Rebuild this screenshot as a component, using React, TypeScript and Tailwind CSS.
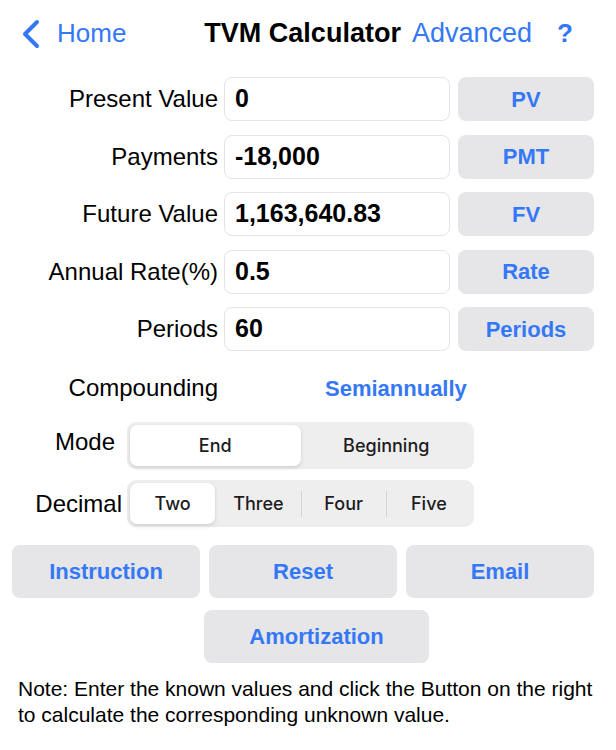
import React from "react";

const blue = "text-[#3478f6]";

function ValueRow({ label, value, action }: { label: string; value: string; action: string }) {
  return (
    <div className="flex items-center h-[44px]">
      <div className="w-[218px] text-right text-[24px] text-black">{label}</div>
      <div className="ml-[6px] w-[226px] h-[44px] rounded-[8px] border border-[#e4e4e6] bg-white flex items-center pl-[10px] text-[25px] font-bold text-black">
        {value}
      </div>
      <button className={`ml-[8px] w-[136px] h-[44px] rounded-[8px] bg-[#e6e6e8] text-[22px] font-bold ${blue}`}>
        {action}
      </button>
    </div>
  );
}

function Segmented({ items, selected }: { items: string[]; selected: number }) {
  return (
    <div className="flex w-[347px] h-[47px] rounded-[9px] bg-[#eeeeef] p-[3px]">
      {items.map((item, i) => {
        const isSel = i === selected;
        const showSep = i > 0 && i !== selected && i - 1 !== selected;
        return (
          <div key={item} className="flex-1 flex items-center">
            {i > 0 && (
              <div className={`w-px h-[26px] ${showSep ? "bg-[#d4d4d6]" : "bg-transparent"}`} />
            )}
            <div
              className={`flex-1 h-full flex items-center justify-center font-['Inter',sans-serif] text-[18px] font-medium text-[#1c1c1e] rounded-[7px] ${
                isSel ? "bg-white shadow-[0_2px_4px_rgba(0,0,0,0.12),0_0_1px_rgba(0,0,0,0.1)]" : ""
              }`}
            >
              {item}
            </div>
          </div>
        );
      })}
    </div>
  );
}

export default function App() {
  return (
    <div className="w-[616px] h-[750px] bg-white font-['Liberation_Sans',Arial,sans-serif] overflow-hidden">
      {/* nav bar */}
      <div className="flex items-center h-[66px] pt-[1px]">
        <svg className="ml-[21px]" width="20" height="30" viewBox="0 0 20 30" fill="none">
          <path d="M16 3 L4 15 L16 27" stroke="#3478f6" strokeWidth="4" strokeLinecap="round" strokeLinejoin="round" />
        </svg>
        <span className={`ml-[16px] text-[26px] ${blue}`}>Home</span>
        <span className="ml-[78px] text-[27px] font-bold text-black">TVM Calculator</span>
        <span className={`ml-[11px] text-[27px] ${blue}`}>Advanced</span>
        <span className={`ml-[25px] text-[26px] font-bold ${blue}`}>?</span>
      </div>

      {/* values */}
      <div className="mt-[11px] flex flex-col gap-[13.5px]">
        <ValueRow label="Present Value" value="0" action="PV" />
        <ValueRow label="Payments" value="-18,000" action="PMT" />
        <ValueRow label="Future Value" value="1,163,640.83" action="FV" />
        <ValueRow label="Annual Rate(%)" value="0.5" action="Rate" />
        <ValueRow label="Periods" value="60" action="Periods" />
      </div>

      {/* compounding */}
      <div className="mt-[15px] flex items-center h-[44px]">
        <div className="w-[218px] text-right text-[24px] text-black">Compounding</div>
        <span className={`ml-[107px] text-[22px] font-bold ${blue}`}>Semiannually</span>
      </div>

      {/* mode */}
      <div className="mt-[12px] flex items-center">
        <div className="w-[115px] text-right text-[24px] text-black -mt-[8px]">Mode</div>
        <div className="ml-[12px]">
          <Segmented items={["End", "Beginning"]} selected={0} />
        </div>
      </div>

      {/* decimal */}
      <div className="mt-[11px] flex items-center">
        <div className="w-[122px] text-right text-[24px] text-black">Decimal</div>
        <div className="ml-[5px]">
          <Segmented items={["Two", "Three", "Four", "Five"]} selected={0} />
        </div>
      </div>

      {/* actions */}
      <div className="mt-[18px] pl-[12px] pr-[22px] grid grid-cols-3 gap-[9px]">
        {["Instruction", "Reset", "Email"].map((t) => (
          <button key={t} className={`h-[53px] rounded-[8px] bg-[#e6e6e8] text-[22px] font-bold ${blue}`}>
            {t}
          </button>
        ))}
      </div>
      <div className="mt-[12px] flex justify-center pl-[17px]">
        <button className={`w-[225px] h-[53px] rounded-[8px] bg-[#e6e6e8] text-[22px] font-bold ${blue}`}>
          Amortization
        </button>
      </div>

      <p className="mt-[13px] pl-[18px] pr-[16px] text-[21px] leading-[26px] text-black">
        Note: Enter the known values and click the Button on the right to calculate the corresponding unknown value.
      </p>
    </div>
  );
}
